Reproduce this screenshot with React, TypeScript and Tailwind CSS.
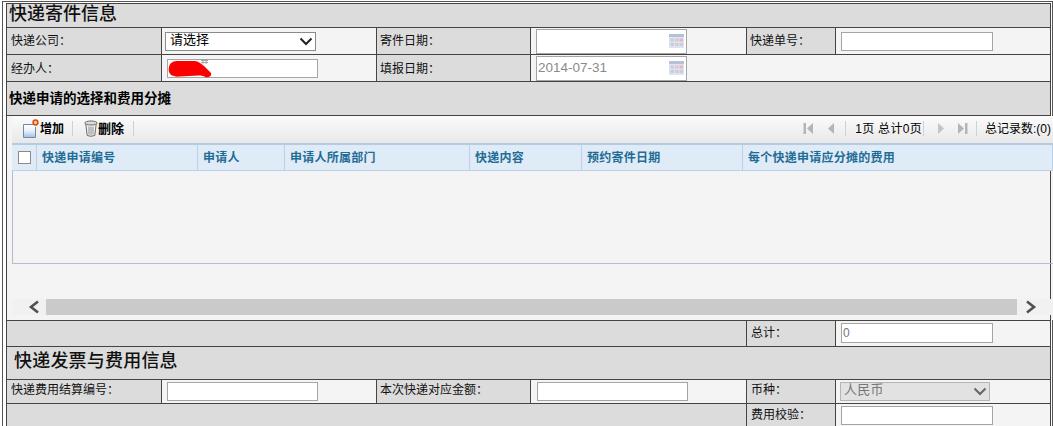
const cell = "border border-[#444444] p-0 align-middle";
const lab = cell + " bg-[#dcdcdc] text-[12px] text-[#111111]";
const val = cell + " bg-[#f4f4f4]";
const inputCls = "block h-[19px] w-[152px] border border-[#a5a5a5] bg-white px-[3px] text-[12px] text-[#555555] outline-none";

function Calendar() {
  return (
    <svg width="15" height="14" viewBox="0 0 15 14" className="absolute right-[2px] top-[4px]">
      <rect x="0" y="0" width="15" height="14" fill="#dde3ef" />
      <rect x="0" y="0" width="15" height="3" fill="#b3c2da" />
      <rect x="1.5" y="4.5" width="3.5" height="3" fill="#c2cfe3" />
      <rect x="6" y="4.5" width="3.5" height="3" fill="#e3c5cc" />
      <rect x="10.5" y="4.5" width="3.5" height="3" fill="#e3b8bf" />
      <rect x="1.5" y="9" width="3.5" height="3" fill="#c2cfe3" />
      <rect x="6" y="9" width="3.5" height="3" fill="#e3c5cc" />
      <rect x="10.5" y="9" width="3.5" height="3" fill="#c2cfe3" />
    </svg>
  );
}

function DateBox({ value }: { value?: string }) {
  return (
    <div className="relative ml-[5px] h-[25px] w-[151px] border border-[#a5a5a5] bg-white pl-[1px] text-[13.5px] leading-[22px] text-[#8a8a8a] font-['Liberation_Sans',sans-serif]">
      {value}
      <Calendar />
    </div>
  );
}

function AddIcon() {
  return (
    <svg width="16" height="20" viewBox="0 0 16 20">
      <defs>
        <linearGradient id="pg" x1="0" y1="0" x2="0" y2="1">
          <stop offset="0" stopColor="#ffffff" />
          <stop offset="0.5" stopColor="#e8f0f8" />
          <stop offset="1" stopColor="#a4c4e4" />
        </linearGradient>
      </defs>
      <path d="M0.5 5.5 H12 M0.5 5.5 V18.5 H12.5 V8" fill="url(#pg)" stroke="#6d8aa8" />
      <rect x="1" y="6" width="11" height="12" fill="url(#pg)" />
      <circle cx="12.5" cy="3.5" r="2.4" fill="#f8d16a" stroke="#d9481c" strokeWidth="1.5" />
    </svg>
  );
}

function TrashIcon() {
  return (
    <svg width="14" height="17" viewBox="0 0 14 17" fill="none" stroke="#6b6b6b">
      <path d="M1.8 4 L3.2 15.5 Q7 17 10.8 15.5 L12.2 4" fill="#f2f4f4" />
      <ellipse cx="7" cy="3" rx="6.2" ry="2" fill="#d9dddd" />
      <path d="M5 6.5 V14.5 M7 6.5 V15 M9 6.5 V14.5" stroke="#8a8a8a" />
    </svg>
  );
}

function Pager({ d }: { d: "first" | "prev" | "next" | "last" }) {
  return (
    <svg width="11" height="15" viewBox="0 0 11 15" className="shrink-0">
      {d === "first" && <path d="M0.5 2h2.5v11H0.5z M10 2v11L4 7.5z" fill="#b5b5b5" />}
      {d === "prev" && <path d="M8 2v11L2 7.5z" fill="#b5b5b5" />}
      {d === "next" && <path d="M3 2v11l6-5.5z" fill="#c4c4c4" />}
      {d === "last" && <path d="M8 2h2.5v11H8z M1 2v11l6-5.5z" fill="#b5b5b5" />}
    </svg>
  );
}

const Sep = ({ cls }: { cls: string }) => <span className={`h-[15px] w-px shrink-0 bg-[#c9d3de] ${cls}`} />;

const columns = [
  { t: "快递申请编号", w: "w-[161px]" },
  { t: "申请人", w: "w-[87px]" },
  { t: "申请人所属部门", w: "w-[185px]" },
  { t: "快递内容", w: "w-[112px]" },
  { t: "预约寄件日期", w: "w-[161px]" },
  { t: "每个快递申请应分摊的费用", w: "flex-1" },
];

function Grid() {
  return (
    <div className="flex h-[204px] w-[1041px] flex-col bg-[#f4f4f4]">
      <div className="flex h-[27px] shrink-0 items-center bg-gradient-to-b from-[#fbfbfb] to-[#e8e8e8] pb-[2px] pl-[11px] text-[12px] text-black">
        <AddIcon />
        <span className="ml-[1px] font-bold">增加</span>
        <Sep cls="ml-[8px] mr-[11px]" />
        <TrashIcon />
        <span className="text-[13px] font-bold">删除</span>
        <Sep cls="ml-[9px]" />
        <div className="ml-auto flex items-center">
          <Pager d="first" />
          <span className="ml-[12px] flex"><Pager d="prev" /></span>
          <Sep cls="ml-[8px]" />
          <span className="ml-[9px] tracking-[0.3px]">1页 总计0页</span>
          <Sep cls="ml-[1px]" />
          <span className="ml-[11px] flex"><Pager d="next" /></span>
          <span className="ml-[11px] flex"><Pager d="last" /></span>
          <Sep cls="ml-[8px]" />
          <span className="ml-[8px] mr-[2px]">总记录数:(0)</span>
        </div>
      </div>
      <div className="flex h-[28px] shrink-0 items-stretch border-t-2 border-b border-t-[#b5cbe3] border-b-[#b9d0e8] bg-[#e0ebf8] text-[12px] font-bold tracking-[0.25px] text-[#1f6d94]">
        <div className="flex w-[25px] items-center justify-center border-r border-[#b9d0e8]">
          <input type="checkbox" className="h-[13px] w-[13px] appearance-none border border-[#8a8a8a] bg-white" />
        </div>
        {columns.map((c) => (
          <div key={c.t} className={`flex items-center border-r border-[#b9d0e8] pl-[5px] ${c.w}`}>
            {c.t}
          </div>
        ))}
      </div>
      <div className="h-[93px] shrink-0 border-b border-l border-[#b6bccd]" />
      <div className="h-[35px] shrink-0" />
      <div className="flex h-[16px] shrink-0 items-stretch">
        <div className="flex w-[34px] items-center justify-center bg-[#f1f1f1] pl-[9px]">
          <svg width="12" height="14" viewBox="0 0 12 14" fill="none" stroke="#505050" strokeWidth="2.6"><path d="M10 1.5 L3 7 L10 12.5" /></svg>
        </div>
        <div className="flex-1 bg-[#cacaca]" />
        <div className="flex w-[36px] items-center justify-center bg-[#f1f1f1] pr-[8px]">
          <svg width="12" height="14" viewBox="0 0 12 14" fill="none" stroke="#505050" strokeWidth="2.6"><path d="M2 1.5 L9 7 L2 12.5" /></svg>
        </div>
      </div>
    </div>
  );
}

function Chevron({ color }: { color: string }) {
  return (
    <svg width="14" height="10" viewBox="0 0 14 10" fill="none" stroke={color} strokeWidth="2" className="pointer-events-none absolute right-[3px] top-[5px]">
      <path d="M1.5 1.5 L7 7 L12.5 1.5" />
    </svg>
  );
}

export default function App() {
  return (
    <div className="h-[426px] w-[1053px] overflow-hidden bg-white font-['Liberation_Sans','Noto_Sans_CJK_SC',sans-serif]">
      <div className="ml-[2px] mt-[1px] h-[430px] w-[1051px] border-l border-r border-t border-[#555555] pl-[3px] pt-[1px]">
        <table className="w-[1045px] table-fixed border-collapse">
          <colgroup>
            <col className="w-[155px]" />
            <col className="w-[215px]" />
            <col className="w-[154px]" />
            <col className="w-[216px]" />
            <col className="w-[89px]" />
            <col className="w-[215px]" />
          </colgroup>
          <tbody>
            <tr className="h-[24px]">
              <td colSpan={6} className={`${cell} bg-[#dcdcdc] pb-[3px] pl-[2px] text-[18px] font-medium leading-[20px] text-[#111111]`}>快递寄件信息</td>
            </tr>
            <tr className="h-[27px]">
              <td className={`${lab} pl-[4px]`}>快递公司：</td>
              <td className={`${val} pl-[3px]`}>
                <div className="relative h-[19px] w-[151px]">
                  <select className="block h-[19px] w-[151px] appearance-none border border-[#8a8a8a] bg-white pb-[3px] pl-[4px] text-[13px] leading-[14px] text-black">
                    <option>请选择</option>
                  </select>
                  <Chevron color="#222222" />
                </div>
              </td>
              <td className={`${lab} pl-[3px]`}>寄件日期：</td>
              <td className={val}><DateBox /></td>
              <td className={`${lab} pl-[3px]`}>快递单号：</td>
              <td className={`${val} pl-[5px]`}><input className={inputCls} /></td>
            </tr>
            <tr className="h-[27px]">
              <td className={`${lab} pl-[4px] pt-[1px]`}>经办人：</td>
              <td className={`${val} pl-[5px]`}>
                <div className="relative h-[19px] w-[151px]">
                  <input className={`${inputCls} !w-[151px]`} />
                  <svg width="46" height="20" viewBox="0 0 46 20" className="absolute left-[1px] top-[0px]">
                    <path d="M33 1.5 H40 M33 3.5 H40 M35 0 V5 M38 0 V5" stroke="#8d8d8d" strokeWidth="0.7" fill="none" />
                    <path d="M1 8 C2 3 6 2 10 2 L27 2 C33 3 37 8 43 14 C44 17 41 19 37 18 C36 17 34 16.5 30 16.5 L12 17.5 C8 18 5 17 3 16 C1 14 0 11 1 8 Z" fill="#fb0000" />
                  </svg>
                </div>
              </td>
              <td className={`${lab} pl-[3px] pt-[1px]`}>填报日期：</td>
              <td colSpan={3} className={val}><DateBox value="2014-07-31" /></td>
            </tr>
            <tr className="h-[34px]">
              <td colSpan={6} className={`${cell} bg-[#dcdcdc] pl-[2px] pt-[1px] text-[13.5px] font-bold text-black`}>快递申请的选择和费用分摊</td>
            </tr>
            <tr className="h-[205px]">
              <td colSpan={6} className="border border-[#444444] bg-[#f4f4f4] p-0 pl-[5px] align-top">
                <Grid />
              </td>
            </tr>
            <tr className="h-[26px]">
              <td colSpan={4} className={`${cell} bg-[#dcdcdc]`} />
              <td className={`${lab} pb-[2px] pl-[4px]`}>总计：</td>
              <td className={`${val} pl-[5px]`}><input className={`${inputCls} mb-[2px] !h-[20px] !pl-[1px] text-[#777777]`} defaultValue="0" /></td>
            </tr>
            <tr className="h-[33px]">
              <td colSpan={6} className={`${cell} bg-[#dcdcdc] pb-[4px] pl-[7px] text-[18px] font-medium tracking-[0.2px] text-[#111111]`}>快递发票与费用信息</td>
            </tr>
            <tr className="h-[24px]">
              <td className={`${lab} pb-[3px] pl-[4px]`}>快递费用结算编号：</td>
              <td className={`${val} pl-[5px]`}><input className={`${inputCls} !w-[151px]`} /></td>
              <td className={`${lab} pb-[3px] pl-[3px]`}>本次快递对应金额：</td>
              <td className={`${val} pl-[6px]`}><input className={`${inputCls} !w-[151px]`} /></td>
              <td className={`${lab} pb-[3px] pl-[4px]`}>币种：</td>
              <td className={`${val} pl-[4px]`}>
                <div className="relative h-[19px] w-[150px]">
                  <select disabled className="block h-[19px] w-[150px] appearance-none border border-[#b5b5b5] bg-[#e2e2e2] pb-[3px] pl-[3px] text-[13px] leading-[14px] tracking-[0.3px] text-[#777777]">
                    <option>人民币</option>
                  </select>
                  <Chevron color="#666666" />
                </div>
              </td>
            </tr>
            <tr className="h-[24px]">
              <td colSpan={4} className={`${cell} bg-[#dcdcdc]`} />
              <td className={`${lab} pb-[2px] pl-[4px]`}>费用校验：</td>
              <td className={`${val} pl-[5px]`}><input className={inputCls} /></td>
            </tr>
          </tbody>
        </table>
      </div>
    </div>
  );
}
